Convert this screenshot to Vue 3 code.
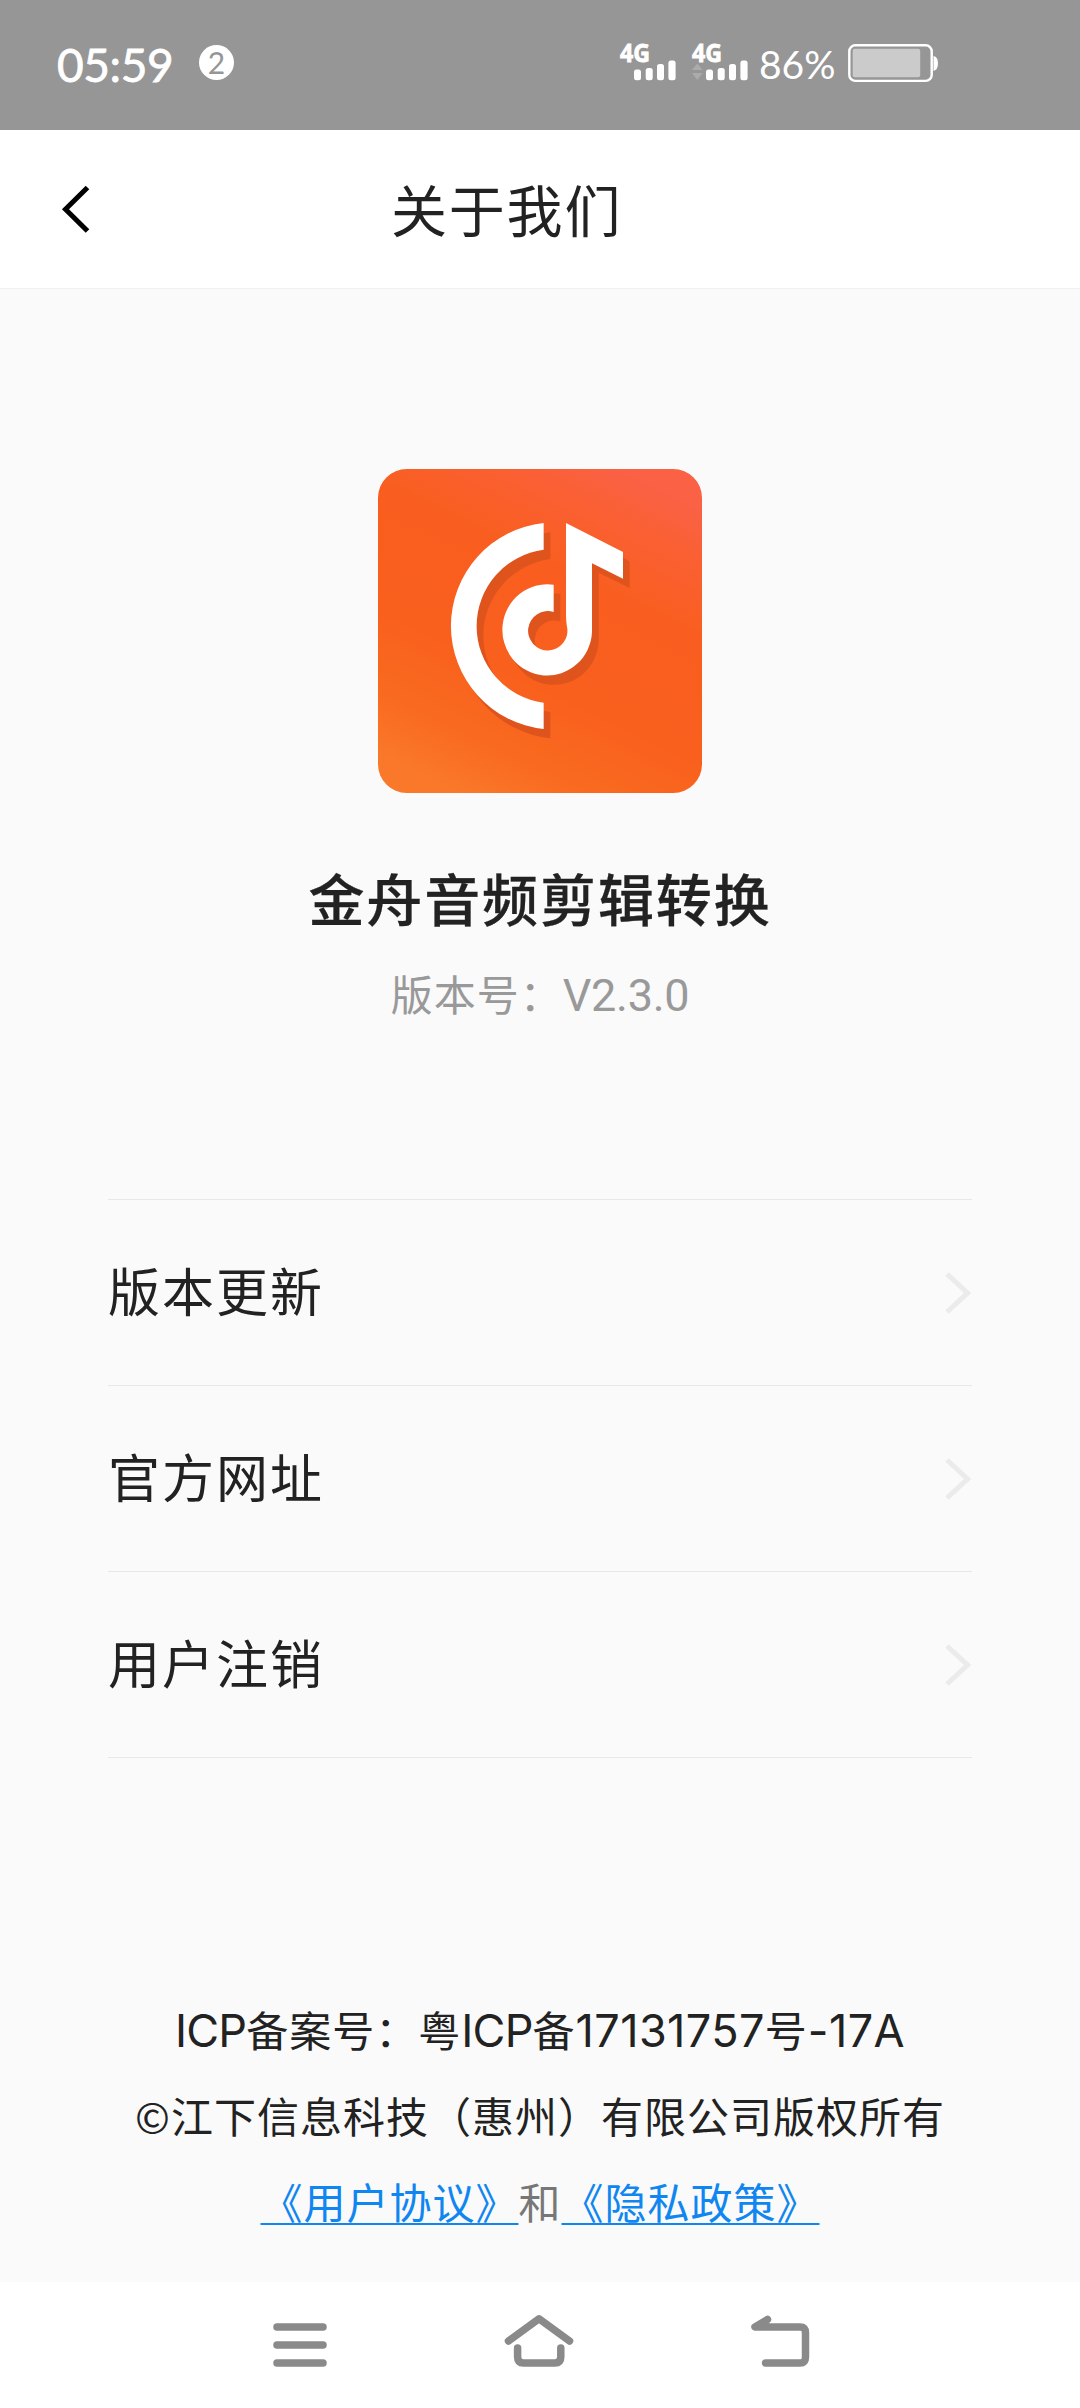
<script setup>
const rows = ['版本更新', '官方网址', '用户注销']
const signals = [
  { id: 1, data: false },
  { id: 2, data: true },
]
</script>

<template>
  <div class="screen">
    <header class="status">
      <span class="time">05:59</span>
      <span class="badge">2</span>
      <div class="indicators">
        <svg v-for="s in signals" :key="s.id" class="signal" width="72" height="60" viewBox="-2 -16 72 60">
          <text x="0" y="18" class="net" textLength="30" lengthAdjust="spacingAndGlyphs">4G</text>
          <g v-if="s.data" fill="#ababab">
            <path d="M5.3 19.5 L10.6 26 H0 Z" />
            <path d="M0 29 H10.6 L5.3 36 Z" />
          </g>
          <g fill="#fff">
            <rect x="14" y="25.5" width="7" height="10.7" rx="2.5" />
            <rect x="25.7" y="24" width="7" height="12.2" rx="2.5" />
            <rect x="37" y="20" width="7" height="16.2" rx="2.5" />
            <rect x="48.4" y="16.5" width="7.2" height="19.7" rx="2.5" />
          </g>
        </svg>
        <span class="percent">86%</span>
        <svg class="battery" width="92" height="40" viewBox="0 0 92 40">
          <rect x="1.3" y="1.3" width="82.4" height="35.6" rx="6" fill="none" stroke="#fff" stroke-width="2.4" />
          <rect x="4.7" y="4.8" width="67.5" height="28.4" rx="2" fill="#cbcbcb" />
          <path d="M85.5 12 Q90 13 90 19.3 Q90 26 85.5 27 Z" fill="#fff" />
        </svg>
      </div>
    </header>

    <nav class="titlebar">
      <svg class="back" width="30" height="48" viewBox="0 0 30 48">
        <path d="M26.5 2.5 L4.5 24.3 L26.5 46" fill="none" stroke="#000" stroke-width="5" />
      </svg>
      <h1>关于我们</h1>
    </nav>

    <main>
      <svg class="logo" width="324" height="324" viewBox="54 57 972 972">
        <defs>
          <linearGradient id="bg" x1="0.74" y1="0" x2="0.26" y2="1">
            <stop offset="0" stop-color="#fa6145" />
            <stop offset="0.12" stop-color="#fa6034" />
            <stop offset="0.32" stop-color="#f95e20" />
            <stop offset="0.62" stop-color="#f95f1d" />
            <stop offset="0.86" stop-color="#f96b20" />
            <stop offset="1" stop-color="#fa7829" />
          </linearGradient>
          <g id="mark">
            <path d="M551 219 A310.700 310.700 0 0 0 551 837 V758 A231.500 231.500 0 0 1 551 299 Z" />
            <path d="M618 219 L789 306 V386 L696 340 V546 A134.500 137 0 1 1 581 404 V486 A59 59 0 1 0 621 530 Q618 515 618 490 Z" />
          </g>
        </defs>
        <rect x="54" y="57" width="972" height="972" rx="86" fill="url(#bg)" />
        <use href="#mark" x="20" y="28" fill="#df541d" />
        <use href="#mark" fill="#fff" />
      </svg>
      <h2>金舟音频剪辑转换</h2>
      <p class="version">版本号：<span>V2.3.0</span></p>

      <ul class="rows">
        <li v-for="row in rows" :key="row">
          <span>{{ row }}</span>
          <svg width="26" height="42" viewBox="0 0 26 42">
            <path d="M2 2 L22.500 21 L2 40" fill="none" stroke="#ebebeb" stroke-width="5" />
          </svg>
        </li>
      </ul>

      <footer>
        <p class="icp"><span>ICP</span>备案号：粤<span>ICP</span>备<span class="num">17131757</span>号<span class="tail">-17A</span></p>
        <p class="copy">©江下信息科技（惠州）有限公司版权所有</p>
        <p class="legal"><a>《用户协议》</a>和<a>《隐私政策》</a></p>
      </footer>
    </main>

    <div class="sysnav">
      <svg width="54" height="60" viewBox="273 2313 54 60">
        <path d="M277 2327 H323 M277 2345 H323 M277 2363 H323" />
      </svg>
      <svg width="70" height="60" viewBox="505 2313 70 60">
        <path d="M509.500 2341 L540 2318.800 L570.500 2341" />
        <path d="M518.600 2348 V2357 Q518.600 2363 524.600 2363 H555.800 Q561.800 2363 561.800 2357 V2348" />
      </svg>
      <svg width="60" height="60" viewBox="750 2313 60 60">
        <path d="M767.500 2319.500 L755 2327 H800 Q805.500 2327 805.500 2333 V2357 Q805.500 2363 800 2363 H765.500" />
      </svg>
    </div>
  </div>
</template>

<style>
body {
  margin: 0;
  background: #fafafa;
}
</style>

<style scoped>
.screen {
  width: 1080px;
  height: 2408px;
  display: flex;
  flex-direction: column;
  background: #fafafa;
  color: #222;
  font-family: "Noto Sans CJK SC", sans-serif;
  overflow: hidden;
}
h1, h2, p, ul {
  margin: 0;
  padding: 0;
  font-weight: 400;
}
.status {
  height: 130px;
  flex: none;
  box-sizing: border-box;
  padding: 44px 0 0 57px;
  display: flex;
  align-items: flex-start;
  background: #969696;
  color: #fff;
}
.time {
  width: 142px;
  margin-top: -2px;
  font: 400 46px/46px Lato, sans-serif;
  letter-spacing: -0.4px;
  -webkit-text-stroke: 0.8px #fff;
}
.badge {
  width: 35px;
  height: 35px;
  margin-top: 1px;
  border-radius: 50%;
  background: #fff;
  color: #969696;
  font: 400 30px/35px Lato, sans-serif;
  text-align: center;
}
.indicators {
  display: flex;
  align-items: flex-start;
  margin-left: 384px;
}
.signal {
  margin-top: -16px;
}
.net {
  font: 700 25px "Open Sans", sans-serif;
  fill: #fff;
  stroke: #fff;
  stroke-width: 0.8px;
}
.percent {
  width: 89px;
  margin-left: -3px;
  font: 400 39px/41px Lato, sans-serif;
  letter-spacing: 0;
}
.titlebar {
  height: 159px;
  flex: none;
  box-sizing: border-box;
  border-bottom: 1px solid #f0f0f0;
  background: #fff;
  display: flex;
  align-items: center;
}
.back {
  margin-left: 61px;
}
h1 {
  margin: -2px 0 0 300px;
  font-size: 56px;
  line-height: 80px;
  letter-spacing: 1.800px;
}
main {
  flex: 1;
  display: flex;
  flex-direction: column;
  align-items: center;
  padding-top: 180px;
}
.logo {
  display: block;
}
h2 {
  margin-top: 64px;
  font-size: 56px;
  line-height: 80px;
  font-weight: 500;
  letter-spacing: 1.900px;
  -webkit-text-stroke: 0.3px #222;
}
.version {
  margin-top: 26px;
  font-size: 42px;
  line-height: 60px;
  letter-spacing: 1px;
  color: #999;
}
.version span {
  font: 400 45px/1 Roboto, sans-serif;
  letter-spacing: -0.3px;
}
.rows {
  width: 864px;
  margin-top: 176px;
  list-style: none;
  border-top: 1px solid #e8e8e8;
}
li {
  height: 186px;
  box-sizing: border-box;
  border-bottom: 1px solid #e8e8e8;
  display: flex;
  align-items: center;
  justify-content: space-between;
}
li span {
  margin-top: -5px;
  font-size: 52px;
  line-height: 80px;
  letter-spacing: 2px;
}
li svg {
  margin-right: 1px;
}
footer {
  margin-top: 228px;
  font-size: 42px;
  line-height: 86px;
  text-align: center;
  white-space: nowrap;
}
footer p {
  height: 86px;
  letter-spacing: 1px;
}
.icp span {
  font: 400 45px/1 Inter, sans-serif;
  letter-spacing: -0.800px;
}
.icp .num,
.icp .tail {
  letter-spacing: 0.400px;
}
.legal {
  color: #777;
}
.legal a {
  color: #0f86f0;
  text-decoration: underline;
  text-decoration-thickness: 2px;
  text-underline-offset: 4px;
  text-decoration-skip-ink: none;
}
.sysnav {
  height: 126px;
  flex: none;
  box-sizing: border-box;
  padding: 31px 270px 0 273px;
  background: #fff;
  display: flex;
  justify-content: space-between;
}
.sysnav path {
  fill: none;
  stroke: #8a8a8a;
  stroke-width: 7.500px;
  stroke-linecap: round;
  stroke-linejoin: round;
}
</style>
